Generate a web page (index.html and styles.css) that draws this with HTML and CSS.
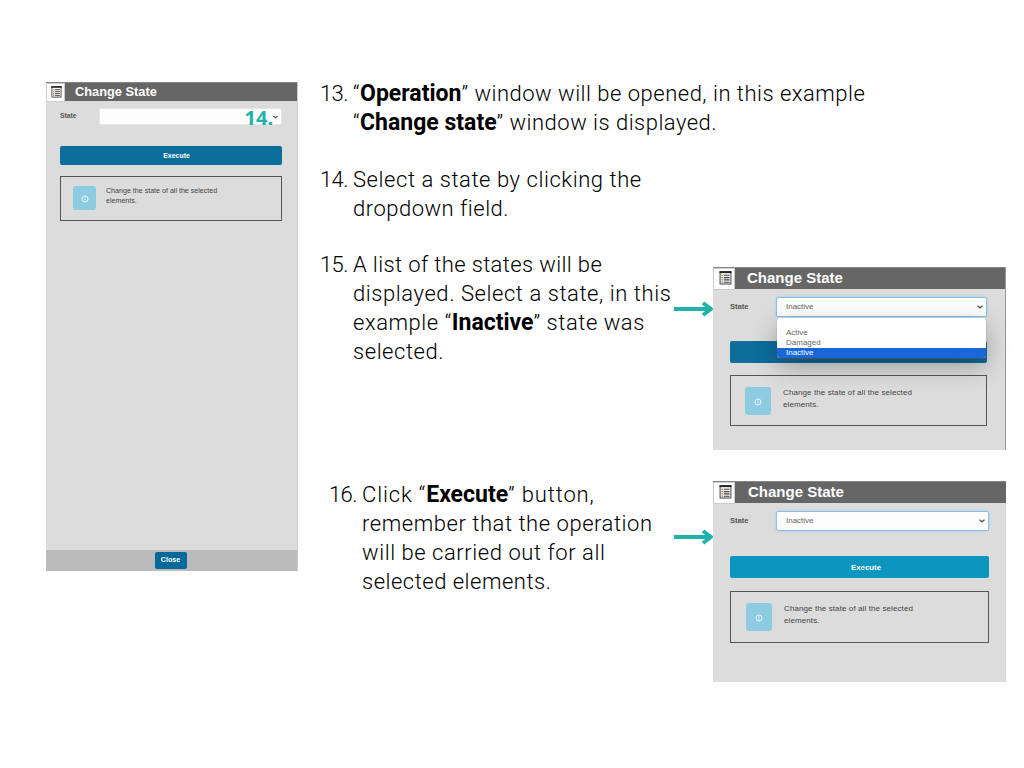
FILE: index.html
```
<!DOCTYPE html>
<html lang="en">
<head>
<meta charset="utf-8">
<title>Change State</title>
<link rel="stylesheet" href="styles.css">
</head>
<body>
<svg class="defs" width="0" height="0">
  <symbol id="list" viewBox="0 0 12 14">
    <rect x=".6" y=".6" width="10.8" height="12.400" fill="#f4f4f4" stroke="#555" stroke-width="1.1"/>
    <path d="M0 1.200h12" stroke="#222" stroke-width="1.800"/>
    <path d="M2 4.300h1.400M2 6.600h1.400M2 8.900h1.400M2 11.200h1.400" stroke="#a77a4c" stroke-width="1.200"/>
    <path d="M4.300 4.300h5.700M4.300 6.600h5.700M4.300 8.900h5.700M4.300 11.200h5.700" stroke="#444" stroke-width="1.100"/>
  </symbol>
  <symbol id="info" viewBox="0 0 8 8">
    <circle cx="4" cy="4" r="3" fill="none" stroke="#eefaff" stroke-width=".9"/>
    <path d="M4 3.6v2M4 2.2v.8" stroke="#eefaff" stroke-width=".9"/>
  </symbol>
  <symbol id="chev" viewBox="0 0 8 6">
    <path d="M1.500 1.800 4 3.800 6.500 1.800" fill="none" stroke="#555" stroke-width="1.300"/>
  </symbol>
  <symbol id="arrow" viewBox="0 0 39 18">
    <path d="M0 9h36M29 3l8 6l-8 6" fill="none" stroke="#20b2aa" stroke-width="3.900" stroke-linejoin="round" stroke-linecap="butt"/>
  </symbol>
</svg>
<main class="page">
  <section class="panel panel-tall">
    <header class="bar"><span class="tab"><svg><use href="#list"/></svg></span><h2>Change State</h2></header>
    <div class="content">
      <div class="field"><span class="label">State</span><div class="select"><span class="mark">14.</span><svg class="chev"><use href="#chev"/></svg></div></div>
      <div class="execute">Execute</div>
      <div class="note"><span class="badge"><svg><use href="#info"/></svg></span><p>Change the state of all the selected<br>elements.</p></div>
    </div>
    <footer class="foot"><span class="close">Close</span></footer>
  </section>
  <div class="steps">
    <div class="step s13"><span class="num">13.</span><p><span class="l1">“<b>Operation</b>” window will be opened, in this example</span><br><span class="l2">“<b>Change state</b>” window is displayed.</span></p></div>
    <div class="step s14"><span class="num">14.</span><p><span class="l3">Select a state by clicking the</span><br><span class="l4">dropdown field.</span></p></div>
    <div class="row r15">
      <div class="step"><span class="num">15.</span><p><span class="l5">A list of the states will be</span><br><span class="l6">displayed. Select a state, in this</span><br><span class="l7">example “<b>Inactive</b>” state was</span><br><span class="l8">selected.</span></p></div>
      <svg class="arrow"><use href="#arrow"/></svg>
      <section class="panel panel-open">
        <header class="bar"><span class="tab"><svg><use href="#list"/></svg></span><h2>Change State</h2></header>
        <div class="content">
          <div class="field"><span class="label">State</span><div class="select focus">Inactive<svg class="chev"><use href="#chev"/></svg>
            <ul class="menu"><li>Active</li><li>Damaged</li><li class="on">Inactive</li></ul></div></div>
          <div class="execute"></div>
          <div class="note"><span class="badge"><svg><use href="#info"/></svg></span><p>Change the state of all the selected<br>elements.</p></div>
        </div>
      </section>
    </div>
    <div class="row r16">
      <div class="step"><span class="num">16.</span><p><span class="l9">Click “<b>Execute</b>” button,</span><br><span class="l10">remember that the operation</span><br><span class="l11">will be carried out for all</span><br><span class="l12">selected elements.</span></p></div>
      <svg class="arrow"><use href="#arrow"/></svg>
      <section class="panel panel-ready">
        <header class="bar"><span class="tab"><svg><use href="#list"/></svg></span><h2>Change State</h2></header>
        <div class="content">
          <div class="field"><span class="label">State</span><div class="select focus">Inactive<svg class="chev"><use href="#chev"/></svg></div></div>
          <div class="execute">Execute</div>
          <div class="note"><span class="badge"><svg><use href="#info"/></svg></span><p>Change the state of all the selected<br>elements.</p></div>
        </div>
      </section>
    </div>
  </div>
</main>
</body>
</html>
```
FILE: styles.css
```
* { box-sizing: border-box; }
body { margin: 0; background: #fff; height: 768px; overflow: hidden; }
h2, p, ul { margin: 0; padding: 0; }
.defs { position: absolute; }
.page { display: flex; align-items: flex-start; padding-left: 46px; }

.steps { margin: 79px 0 0 22px; width: 686px; font: 300 22px/29px Roboto, sans-serif; letter-spacing: .55px; color: #000; }
.step { display: flex; }
.step p { white-space: nowrap; }
.step b { font-weight: 700; font-size: 23px; line-height: 20px; letter-spacing: 0; }
.num { flex: 0 0 33px; letter-spacing: -.6px; }
.l1 { letter-spacing: .5px; }
.l2 { letter-spacing: .48px; }
.l3 { letter-spacing: .56px; }
.l4 { letter-spacing: .5px; }
.l5 { letter-spacing: .37px; }
.l6 { letter-spacing: .57px; }
.l9 { letter-spacing: .85px; }
.l12 { letter-spacing: .5px; }
.s14 { margin-top: 28px; }
.row { display: flex; align-items: flex-start; }
.row .step { flex: 0 0 354px; min-width: 0; }
.r15 { margin-top: 27px; height: 230px; }
.r16 .step { padding-left: 9px; }
.arrow { flex: 0 0 39px; width: 39px; height: 18px; margin-top: 50px; }
.r16 .arrow { margin-top: 48px; }

.panel { --fs: 8px; flex: none; background: #dcdcdc; font: 400 var(--fs)/12px "Liberation Sans", Arial, sans-serif; letter-spacing: 0; color: #444; }
.bar { display: flex; align-items: center; height: 22px; background: #666; border-top: 1px solid #858585; }
.bar h2 { font-size: 15px; line-height: 18px; color: #fff; margin-left: 12px; white-space: nowrap; }
.tab { display: flex; align-items: center; justify-content: center; align-self: flex-start; width: 22px; height: 22px; padding: 0 0 2px 2px; background: #fff; border: 1px solid #ccc; }
.tab svg { width: 13px; height: 14px; }
.content { padding: 8px 18px 0 17px; }
.field { display: flex; align-items: center; }
.label { flex: 0 0 46px; font-weight: 700; font-size: .95em; color: #555; }
.select { position: relative; flex: 1; display: flex; align-items: center; justify-content: space-between; height: 20px; padding: 0 2px 0 9px; background: #fdfdfd; border: 1px solid #e6e6e6; border-radius: 2px; color: #666; }
.focus { border-color: #8abfe8; box-shadow: 0 0 3px #a8cce8; }
.chev { width: 8px; height: 6px; }
.execute { display: flex; align-items: center; justify-content: center; height: 22px; margin-top: 25px; padding: 1px 0 0 13px; background: #0b6e9b; border-radius: 2px; color: #fff; font-weight: 700; font-size: .98em; }
.note { display: flex; height: 52px; margin-top: 13px; padding: 11px 0 0 15px; border: 1px solid #555; letter-spacing: .1px; }
.note p { margin-left: 12px; white-space: nowrap; }
.badge { display: flex; align-items: center; justify-content: center; width: 26px; height: 28px; padding-top: 2px; background: #8dcbe0; border-radius: 3px; }
.badge svg { width: 8px; height: 8px; }

.panel-tall { --fs: 7.1px; display: flex; flex-direction: column; width: 252px; height: 489px; margin-top: 82px; line-height: 10px; border-right: 1px solid #ccc; }
.panel-tall .bar { height: 19px; }
.panel-tall .bar h2 { font-size: 12.800px; margin-left: 10px; padding-bottom: 1px; }
.panel-tall .tab { width: 19px; height: 19px; }
.panel-tall .tab svg { width: 11px; height: 12px; }
.panel-tall .content { flex: 1; padding: 7px 15px 0 14px; }
.panel-tall .label { flex-basis: 39px; padding-bottom: 1px; }
.panel-tall .select { height: 17px; justify-content: flex-end; }
.panel-tall .chev { width: 7px; }
.panel-tall .execute { height: 19px; margin-top: 21px; padding-left: 11px; }
.panel-tall .note { height: 45px; margin-top: 11px; padding: 9px 0 0 12px; letter-spacing: 0; }
.panel-tall .badge { width: 23px; height: 24px; }
.panel-tall .note p { margin-left: 10px; }
.mark { font: 700 20px/17px "Noto Sans", sans-serif; color: #20b2aa; margin-right: -1px; padding-top: 1px; }
.foot { display: flex; align-items: center; justify-content: center; height: 21px; background: #bababa; }
.close { width: 32px; height: 17px; margin-right: 2px; line-height: 17px; text-align: center; border-radius: 2px; background: #04689a; color: #fff; font-weight: 700; }

.panel-open { position: relative; width: 293px; height: 183px; margin-top: 17px; border-right: 1px solid #999; }
.panel-open .bar h2 { padding-bottom: 2px; }
.panel-open .execute { margin-top: 24px; }
.panel-open .note { height: 51px; margin-top: 12px; padding-left: 14px; }
.menu { position: absolute; z-index: 2; left: 0; right: 0; top: 20px; height: 40px; padding-top: 10px; list-style: none; background: #fff; border-radius: 3px; line-height: 10px; box-shadow: 0 1px 1px #456, 0 8px 24px rgba(0,0,0,.3); overflow: hidden; }
.menu li { padding-left: 9px; }
.menu .on { height: 10px; background: #1967d8; color: #fff; }
.panel-ready { width: 293px; height: 201px; margin-top: 1px; }
.panel-ready .content { padding-right: 17px; }
.panel-ready .bar h2 { margin-left: 13px; padding-bottom: 1px; }
.panel-ready .execute { background: #0b96c0; }
```
